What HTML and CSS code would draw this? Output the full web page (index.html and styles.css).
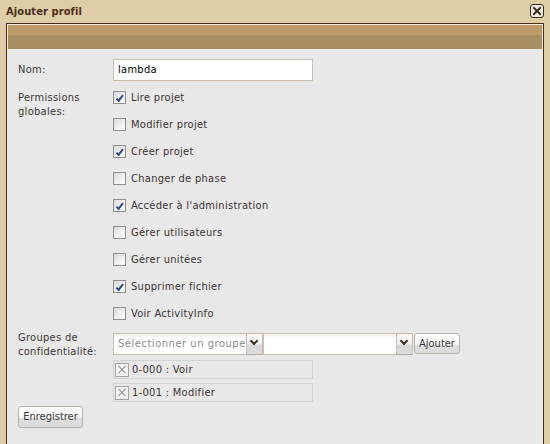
FILE: index.html
```html
<!DOCTYPE html>
<html lang="fr">
<head>
<meta charset="utf-8">
<title>Ajouter profil</title>
<link rel="stylesheet" href="styles.css">
</head>
<body>
<div class="window">
  <div class="titlebar">
    <span class="title">Ajouter profil</span>
    <span class="close">
      <svg width="14" height="14" viewBox="0 0 14 14"><rect x="0.5" y="0.5" width="13" height="13" rx="2.5" fill="#f3ede2" stroke="#3d2b1c"/><path d="M4 4 L10 10 M10 4 L4 10" stroke="#3d2b1c" stroke-width="2" stroke-linecap="square"/></svg>
    </span>
  </div>
  <div class="panel">
    <div class="inner">
      <div class="band1"></div>
      <div class="band2"></div>
      <div class="form">
        <div class="row row-nom">
          <div class="lbl">Nom:</div>
          <div class="textfield">lambda</div>
        </div>
        <div class="row row-perm">
          <div class="lbl">Permissions<br>globales:</div>
          <div class="checks">
            <div class="check"><span class="box on"></span>Lire projet</div>
            <div class="check"><span class="box"></span>Modifier projet</div>
            <div class="check"><span class="box on"></span>Créer projet</div>
            <div class="check"><span class="box"></span>Changer de phase</div>
            <div class="check"><span class="box on"></span>Accéder à l'administration</div>
            <div class="check"><span class="box"></span>Gérer utilisateurs</div>
            <div class="check"><span class="box"></span>Gérer unitées</div>
            <div class="check"><span class="box on"></span>Supprimer fichier</div>
            <div class="check"><span class="box"></span>Voir ActivityInfo</div>
          </div>
        </div>
        <div class="row row-groups">
          <div class="lbl">Groupes de<br>confidentialité:</div>
          <div class="groups">
            <div class="combo-line">
              <div class="combo"><div class="combo-input placeholder">Sélectionner un groupe</div><div class="trigger"></div></div>
              <div class="combo"><div class="combo-input"></div><div class="trigger"></div></div>
              <div class="btn add">Ajouter</div>
            </div>
            <div class="item"><span class="xicon"></span>0-000 : Voir</div>
            <div class="item"><span class="xicon"></span>1-001 : Modifier</div>
          </div>
        </div>
        <div class="btn save">Enregistrer</div>
      </div>
    </div>
  </div>
</div>
</body>
</html>
```

FILE: styles.css
```css
html, body {
  margin: 0;
  padding: 0;
}
body {
  width: 550px;
  height: 444px;
  overflow: hidden;
  background: #decda7;
  font-family: "DejaVu Sans Condensed", "DejaVu Sans", sans-serif;
  font-size: 11px;
  letter-spacing: 0.3px;
  color: #3a3232;
}
.window {
  display: flex;
  flex-direction: column;
  height: 444px;
}
.titlebar {
  height: 23px;
  flex: none;
  display: flex;
  align-items: center;
  justify-content: space-between;
  padding: 0 6px;
}
.title {
  font-weight: bold;
  color: #4a2d1c;
  margin-top: -1px;
  letter-spacing: 0.1px;
}
.close {
  width: 14px;
  height: 14px;
  display: block;
  margin-top: -1px;
}
.close svg {
  display: block;
}
.panel {
  flex: 1;
  margin: 0 6px;
  border: 1px solid #4a2a18;
  border-bottom: none;
  padding: 1px 1px 0 1px;
  background: #f2ece2;
  display: flex;
}
.inner {
  flex: 1;
  background: #e8e8e8;
}
.band1 {
  height: 10px;
  background: #bd9c6a;
}
.band2 {
  height: 14px;
  background: #a88f63;
}
.form {
  padding: 10px 0 0 10px;
}
.row {
  display: flex;
}
.lbl {
  width: 95px;
  flex: none;
  line-height: 14px;
  color: #3a3636;
}
.row-nom .lbl {
  padding-top: 4px;
}
.textfield {
  box-sizing: border-box;
  width: 200px;
  height: 22px;
  border: 1px solid #c8beb3;
  background: #fff;
  color: #000;
  padding: 0 4px;
  line-height: 20px;
}
.row-perm {
  margin-top: 3px;
}
.row-perm .lbl {
  padding-top: 7px;
}
.check {
  height: 27px;
  display: flex;
  align-items: center;
  gap: 5px;
}
.box {
  box-sizing: border-box;
  width: 13px;
  height: 13px;
  border: 1px solid #8e8f8f;
  background: linear-gradient(135deg, #d9d9d9 0%, #f6f6f6 70%, #ffffff 100%);
  position: relative;
}
.box.on::after {
  content: "";
  position: absolute;
  left: 3px;
  top: 1px;
  width: 2px;
  height: 6px;
  border: solid #34448e;
  border-width: 0 2px 2px 0;
  transform: rotate(38deg) translate(1px, 0);
}
.row-groups {
  margin-top: 6px;
}
.row-groups .lbl {
  margin-top: -2px;
}
.groups {
  display: flex;
  flex-direction: column;
}
.combo-line {
  display: flex;
  align-items: flex-start;
}
.combo {
  display: flex;
  width: 150px;
  height: 22px;
  box-sizing: border-box;
}
.combo-input {
  box-sizing: border-box;
  width: 133px;
  height: 22px;
  border: 1px solid #c8beb3;
  border-right: none;
  background: linear-gradient(#ececec 0, #ffffff 4px);
  padding: 0 4px;
  line-height: 20px;
  overflow: hidden;
  white-space: nowrap;
}
.placeholder {
  color: #8a8a8a;
  letter-spacing: 0.55px;
  padding-right: 0;
}
.trigger {
  box-sizing: border-box;
  width: 17px;
  height: 22px;
  border: 1px solid #c8beb3;
  border-bottom-color: #b0aaa4;
  background: linear-gradient(#f8f8f8 0, #f0f0f0 50%, #d8d8d8 55%, #dcdcdc 100%);
  position: relative;
}
.trigger::after {
  content: "";
  position: absolute;
  left: 4px;
  top: 4px;
  width: 4px;
  height: 4px;
  border: solid #3b3020;
  border-width: 0 2px 2px 0;
  transform: rotate(45deg);
}
.btn {
  box-sizing: border-box;
  border: 1px solid #b9b2ab;
  border-radius: 3px;
  background: linear-gradient(#fdfdfd 0, #f6f6f6 55%, #dedede 56%, #dcdcdc 100%);
  color: #3a3a3a;
  text-align: center;
  line-height: 19px;
  letter-spacing: 0;
}
.add {
  width: 46px;
  height: 21px;
  margin-left: 1px;
}
.item {
  box-sizing: border-box;
  width: 200px;
  height: 19px;
  border: 1px solid #d2d2d2;
  display: flex;
  align-items: center;
  gap: 3px;
  padding-left: 1px;
  margin-top: 4px;
}
.combo-line + .item {
  margin-top: 5px;
}
.xicon {
  box-sizing: border-box;
  width: 14px;
  height: 14px;
  border: 1px solid #a3a3a3;
  background: #f5f5f5;
  position: relative;
  flex: none;
}
.xicon::before, .xicon::after {
  content: "";
  position: absolute;
  left: 1px;
  top: 5px;
  width: 10px;
  height: 1px;
  background: #8c8c8c;
}
.xicon::before { transform: rotate(45deg); }
.xicon::after { transform: rotate(-45deg); }
.save {
  width: 65px;
  height: 22px;
  line-height: 20px;
  margin-top: 4px;
}
```
